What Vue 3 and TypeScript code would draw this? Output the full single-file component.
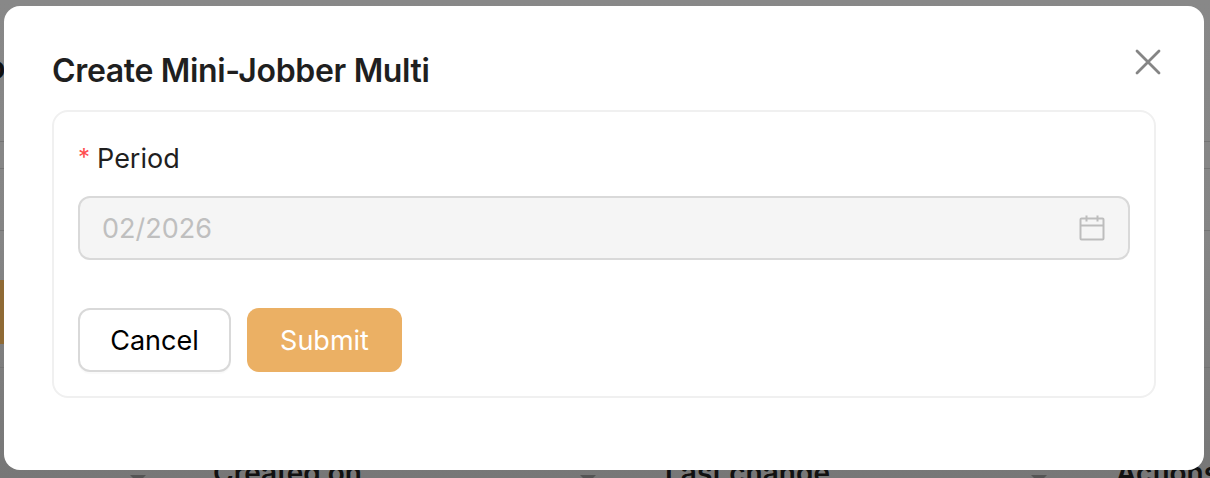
<script setup lang="ts">
const headers = [
  { label: 'Created on', left: 213, arrow: 130 },
  { label: 'Last change', left: 665, arrow: 580 },
  { label: 'Actions', left: 1116, arrow: 1031 },
]
</script>

<template>
  <div class="page">
    <div class="backdrop">
      <span class="behind-letter">o</span>
      <div class="behind-line l1"></div>
      <div class="behind-line l2"></div>
      <div class="behind-line l3"></div>
      <div class="behind-line l4"></div>
      <div class="behind-btn"></div>
      <template v-for="h in headers" :key="h.label">
        <span class="head-label" :style="{ left: h.left + 'px' }">{{ h.label }}</span>
        <span class="head-arrow" :style="{ left: h.arrow + 'px' }"></span>
      </template>
    </div>

    <section class="modal">
      <button class="close" aria-label="Close">
        <svg width="26" height="26" viewBox="0 0 26 26" fill="none">
          <path d="M2 2 24 24M24 2 2 24" stroke="#858585" stroke-width="2.8" stroke-linecap="round" />
        </svg>
      </button>
      <h1 class="title">Create Mini-Jobber Multi</h1>
      <div class="card">
        <label class="label"><span class="star">*</span>Period</label>
        <div class="field">
          <span class="value">02/2026</span>
          <svg class="cal" width="26" height="26" viewBox="0 0 26 26" fill="none" stroke="#bdbdbd" stroke-width="2">
            <rect x="1.5" y="3.5" width="23" height="21" rx="1" />
            <path d="M1.5 10.5h23M7.5 0.5v6M18.5 0.5v6" />
          </svg>
        </div>
        <div class="actions">
          <button class="btn cancel">Cancel</button>
          <button class="btn submit">Submit</button>
        </div>
      </div>
    </section>
  </div>
</template>

<style>
html, body { margin: 0; background: #858585; }
</style>

<style scoped>
.page {
  position: relative;
  width: 1210px;
  height: 478px;
  overflow: hidden;
  font-family: Inter, "Liberation Sans", sans-serif;
  background: linear-gradient(#888888 0, #858585 50%, #777777 100%);
}
.backdrop { position: absolute; inset: 0; }
.behind-letter {
  position: absolute; left: -14px; top: 48px;
  font-size: 32px; font-weight: 600; color: #111;
}
.behind-line { position: absolute; left: 0; width: 1210px; height: 1px; background: #747474; }
.l1 { top: 141px; }
.l2 { top: 168px; }
.l3 { top: 230px; }
.l4 { top: 367px; }
.behind-btn { position: absolute; left: 0; top: 280px; width: 4px; height: 64px; background: #8f6a35; }
.head-label {
  position: absolute; top: 456px;
  font-size: 28px; font-weight: 600; color: #111; white-space: nowrap;
}
.head-arrow {
  position: absolute; top: 475px; width: 0; height: 0;
  border-left: 8.5px solid transparent; border-right: 8.5px solid transparent;
  border-top: 8px solid #555;
}
.modal {
  position: absolute;
  left: 4px; top: 6px;
  width: 1200px; height: 464px;
  box-sizing: border-box;
  padding: 46px 48px 0;
  background: #fff;
  border-radius: 16px;
}
.close {
  position: absolute; right: 43px; top: 43px;
  padding: 0; border: 0; background: none; display: flex;
}
.title {
  margin: 0 0 20px;
  font-size: 32px; line-height: 38px; font-weight: 600; color: #1f1f1f;
  letter-spacing: -0.34px;
}
.card {
  box-sizing: border-box;
  height: 288px;
  padding: 30px 24px 0;
  border: 2px solid #f0f0f0;
  border-radius: 16px;
}
.label { display: block; font-size: 27px; line-height: 34px; color: #1f1f1f; }
.star { color: #ff4d4f; margin-right: 7px; font-size: 24px; position: relative; top: -2px; }
.field {
  margin-top: 19px;
  box-sizing: border-box;
  height: 64px;
  display: flex; align-items: center; justify-content: space-between;
  padding: 0 23px 0 22px;
  border: 2px solid #d9d9d9;
  border-radius: 12px;
  background: #f5f5f5;
}
.value { font-size: 27px; color: #bfbfbf; }
.cal { flex: none; }
.actions { display: flex; gap: 16px; margin-top: 48px; }
.btn {
  box-sizing: border-box;
  height: 64px;
  border-radius: 12px;
  font-family: inherit;
  font-size: 27px;
  padding: 0;
}
.cancel { width: 153px; background: #fff; border: 2px solid #d9d9d9; color: #000; box-shadow: 0 2px 0 rgba(0,0,0,.02); }
.submit { width: 155px; background: #ebb064; border: 0; color: #fff; }
</style>
